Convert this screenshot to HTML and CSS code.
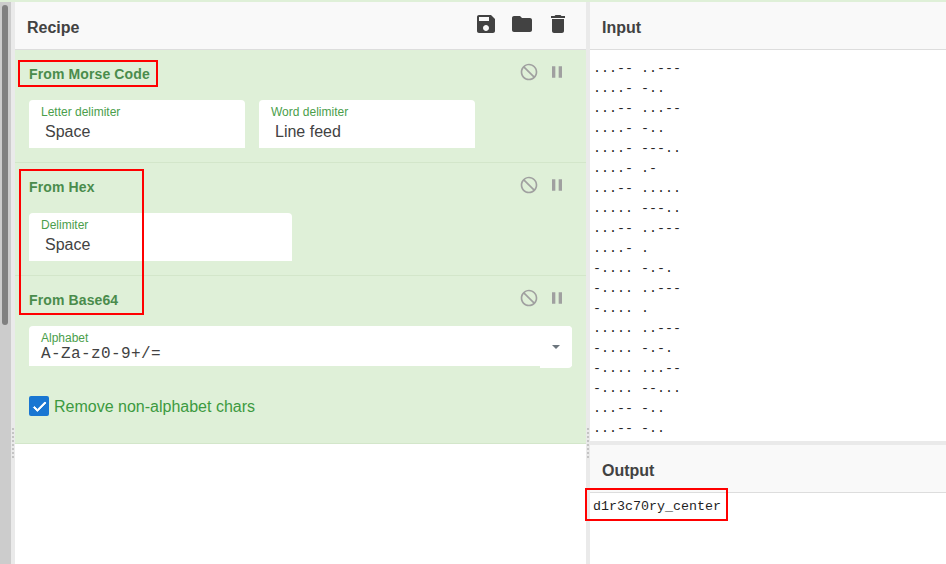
FILE: index.html
```html
<!DOCTYPE html>
<html lang="en">
<head>
<meta charset="utf-8">
<title>CyberChef</title>
<link rel="stylesheet" href="styles.css">
</head>
<body>
<div class="topline"></div>
<div class="app">
  <div class="scrollbar"><div class="thumb"></div></div>
  <div class="gutter"><span class="dots"></span></div>
  <section class="recipe">
    <header class="head">
      <h2>Recipe</h2>
      <div class="head-icons">
        <svg class="hicon" viewBox="0 0 24 24"><path d="M17 3H5c-1.11 0-2 .9-2 2v14c0 1.1.89 2 2 2h14c1.1 0 2-.9 2-2V7l-4-4zm-5 16c-1.66 0-3-1.34-3-3s1.34-3 3-3 3 1.34 3 3-1.34 3-3 3zm3-10H5V5h10v4z"/></svg>
        <svg class="hicon" viewBox="0 0 24 24"><path d="M10 4H4c-1.1 0-1.99.9-1.99 2L2 18c0 1.1.9 2 2 2h16c1.1 0 2-.9 2-2V8c0-1.1-.9-2-2-2h-8l-2-2z"/></svg>
        <svg class="hicon" viewBox="0 0 24 24"><path d="M6 19c0 1.1.9 2 2 2h8c1.1 0 2-.9 2-2V7H6v12zM19 4h-3.5l-1-1h-5l-1 1H5v2h14V4z"/></svg>
      </div>
    </header>

    <div class="op">
      <div class="op-title">
        <span>From Morse Code</span>
        <div class="op-icons">
          <svg class="oicon flip" viewBox="0 0 24 24"><path d="M12 2C6.48 2 2 6.48 2 12s4.48 10 10 10 10-4.48 10-10S17.52 2 12 2zM4 12c0-4.42 3.58-8 8-8 1.85 0 3.55.63 4.9 1.69L5.69 16.9C4.63 15.55 4 13.85 4 12zm8 8c-1.85 0-3.55-.63-4.9-1.69L18.31 7.1C19.37 8.45 20 10.15 20 12c0 4.42-3.58 8-8 8z"/></svg>
          <svg class="oicon" viewBox="0 0 24 24"><path d="M6 19h4V5H6v14zm8-14v14h4V5h-4z"/></svg>
        </div>
      </div>
      <div class="fields">
        <div class="field w216"><label>Letter delimiter</label><div class="val">Space</div></div>
        <div class="field w216"><label>Word delimiter</label><div class="val">Line feed</div></div>
      </div>
    </div>

    <div class="op">
      <div class="op-title">
        <span>From Hex</span>
        <div class="op-icons">
          <svg class="oicon flip" viewBox="0 0 24 24"><path d="M12 2C6.48 2 2 6.48 2 12s4.48 10 10 10 10-4.48 10-10S17.52 2 12 2zM4 12c0-4.42 3.58-8 8-8 1.85 0 3.55.63 4.9 1.69L5.69 16.9C4.63 15.55 4 13.85 4 12zm8 8c-1.85 0-3.55-.63-4.9-1.69L18.31 7.1C19.37 8.45 20 10.15 20 12c0 4.42-3.58 8-8 8z"/></svg>
          <svg class="oicon" viewBox="0 0 24 24"><path d="M6 19h4V5H6v14zm8-14v14h4V5h-4z"/></svg>
        </div>
      </div>
      <div class="fields">
        <div class="field w263"><label>Delimiter</label><div class="val">Space</div></div>
      </div>
    </div>

    <div class="op op-last">
      <div class="op-title">
        <span>From Base64</span>
        <div class="op-icons">
          <svg class="oicon flip" viewBox="0 0 24 24"><path d="M12 2C6.48 2 2 6.48 2 12s4.48 10 10 10 10-4.48 10-10S17.52 2 12 2zM4 12c0-4.42 3.58-8 8-8 1.85 0 3.55.63 4.9 1.69L5.69 16.9C4.63 15.55 4 13.85 4 12zm8 8c-1.85 0-3.55-.63-4.9-1.69L18.31 7.1C19.37 8.45 20 10.15 20 12c0 4.42-3.58 8-8 8z"/></svg>
          <svg class="oicon" viewBox="0 0 24 24"><path d="M6 19h4V5H6v14zm8-14v14h4V5h-4z"/></svg>
        </div>
      </div>
      <div class="fields">
        <div class="field alpha"><label>Alphabet</label><div class="val-mono">A-Za-z0-9+/=</div><span class="caret-box"><span class="caret"></span></span></div>
      </div>
      <div class="check-row">
        <span class="checkbox"><svg viewBox="0 0 24 24"><path d="M9 16.17L4.83 12l-1.41 1.41L9 19 21 7l-1.41-1.41z"/></svg></span>
        <span class="check-label">Remove non-alphabet chars</span>
      </div>
    </div>
  </section>

  <div class="gutter"><span class="dots"></span></div>

  <section class="io">
    <header class="head"><h2>Input</h2></header>
    <pre class="input">...-- ..---
....- -..
...-- ...--
....- -..
....- ---..
....- .-
...-- .....
..... ---..
...-- ..---
....- .
-.... -.-.
-.... ..---
-.... .
..... ..---
-.... -.-.
-.... ...--
-.... --...
...-- -..
...-- -..</pre>
    <div class="hsep"></div>
    <header class="head"><h2>Output</h2></header>
    <pre class="output">d1r3c70ry_center</pre>
  </section>
</div>
<div class="mark mark-morse"></div>
<div class="mark mark-hex"></div>
<div class="mark mark-output"></div>
</body>
</html>
```

FILE: styles.css
```css
* { box-sizing: border-box; }
html, body { margin: 0; padding: 0; height: 100%; overflow: hidden; background: #fff; }
body { font-family: "Liberation Sans", Arial, sans-serif; color: #424242; width: 946px; height: 564px; position: relative; }

.topline { height: 2px; background: #dff0d8; }
.app { display: flex; height: 562px; }

.scrollbar { width: 11px; background: #cccccc; padding: 3px 3px 0 2px; flex: none; }
.thumb { width: 6px; height: 320px; background: #808080; border-radius: 3px; }

.gutter { width: 4px; flex: none; background: #eaeaea; position: relative; }
.dots { position: absolute; left: 1px; top: 426px; width: 2px; height: 30px;
  background: repeating-linear-gradient(to bottom, #c4c4c4 0 2px, transparent 2px 4px); }

.recipe { width: 571px; flex: none; background: #fff; }
.io { flex: 1; min-width: 0; display: flex; flex-direction: column; }

.head { height: 48px; background: #f9f9f9; border-bottom: 1px solid #dddddd; display: flex; align-items: center; padding: 4px 12px 0 12px; flex: none; }
.head h2 { margin: 0; font-size: 16px; font-weight: 700; color: #424242; }
.head-icons { margin-left: auto; display: flex; gap: 12px; margin-top: -8px; padding-right: 6px; margin-right: -2px; }
.hicon { width: 24px; height: 24px; fill: #424242; display: block; }

.op { height: 113px; background: #dff0d8; border-bottom: 1px solid #d3e6ca; padding: 12px 14px 0 14px; position: relative; }
.op-last { height: 168px; border-bottom: 1px solid #d3e6ca; }
.op-title { display: flex; align-items: center; height: 24px; font-size: 14px; font-weight: 700; color: #4a8c4c; letter-spacing: 0.12px; }
.op-icons { margin-left: auto; display: flex; gap: 8px; margin-right: 5px; margin-top: -4px; }
.oicon { width: 20px; height: 20px; fill: #a0a0a0; display: block; }
.flip { transform: scaleX(-1); }

.fields { display: flex; gap: 14px; margin-top: 14px; }
.field { height: 48px; background: #fff; border-radius: 4px 4px 0 0; position: relative; padding: 5px 0 0 12px; }
.w216 { width: 216px; }
.w263 { width: 263px; }
.alpha { width: 543px; height: 40px; }
.field label { display: block; font-size: 12px; line-height: 14px; color: #4a9e4b; }
.val { font-size: 16px; line-height: 18px; color: #424242; padding-left: 4px; margin-top: 4px; }
.val-mono { font-family: "Liberation Mono", monospace; font-size: 16px; line-height: 16px; color: #424242; letter-spacing: 0.4px; margin-top: 1px; }

.caret-box { position: absolute; right: 0; top: 0; width: 32px; height: 42px; background: #fff; border-radius: 0 4px 4px 0; }
.caret { position: absolute; left: 12px; top: 19px; border-left: 4px solid transparent; border-right: 4px solid transparent; border-top: 4px solid #6c757d; }

.check-row { display: flex; align-items: center; gap: 5px; margin-top: 30px; }
.checkbox { width: 20px; height: 20px; border-radius: 2px; background: #1976d2; display: flex; align-items: center; justify-content: center; }
.checkbox svg { width: 17px; height: 17px; fill: #fff; stroke: #fff; stroke-width: 1.4; display: block; }
.check-label { font-size: 16px; color: #3c9a40; position: relative; top: 1px; }

.input, .output { margin: 0; font-family: "Liberation Mono", monospace; font-size: 13.33px; line-height: 20px; color: #1f1f1f; padding: 9px 0 0 3px; background: #fff; }
.input { height: 391px; overflow: hidden; }
.output { flex: 1; padding-top: 4px; }
.hsep { height: 4px; background: #eaeaea; flex: none; }

.mark { position: absolute; border: 2px solid #ff0000; pointer-events: none; }
.mark-morse { left: 18px; top: 60px; width: 140px; height: 27px; }
.mark-hex { left: 19px; top: 169px; width: 125px; height: 146px; }
.mark-output { left: 585px; top: 488px; width: 143px; height: 33px; }
```
